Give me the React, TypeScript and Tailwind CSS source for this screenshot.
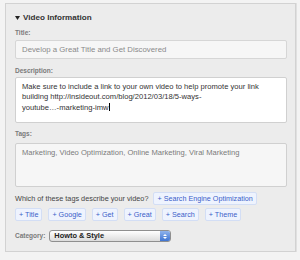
import React from 'react';

const tagButtons = ['Title', 'Google', 'Get', 'Great', 'Search', 'Theme'];

function TagButton({ label }: { label: string }) {
  return (
    <span className="inline-flex h-[13px] items-center rounded-[2px] border border-[#d3def5] bg-[#eef3fe] px-[3px] text-[7.2px] leading-none text-[#3b5fc9]">
      + {label}
    </span>
  );
}

function Label({ children }: { children: React.ReactNode }) {
  return <div className="text-[6.5px] font-bold leading-[8px] text-[#7a7a7a]">{children}</div>;
}

export default function App() {
  return (
    <div className="h-[260px] w-[300px] bg-[#f3f3f3] pl-[5px] pt-[3px] font-['Liberation_Sans',Arial,sans-serif]">
      <div className="flex h-[249px] w-[291px] flex-col border border-[#d2d2d2] bg-[#ececec] pl-[9px] pr-[8px] pt-[9px] shadow-[1px_0_0_#e0e0e0]">
        {/* header */}
        <div className="flex h-[10px] items-center gap-[2px]">
          <svg width="5" height="4" viewBox="0 0 5 4" className="mr-[1px]">
            <path d="M0 0 H5 L2.5 4 Z" fill="#222" />
          </svg>
          <span className="text-[8.1px] font-bold leading-none text-[#333]">Video Information</span>
        </div>

        <div className="mt-[6px]">
          <Label>Title:</Label>
        </div>
        <div className="mt-[3px] flex h-[19px] w-[272px] items-center rounded-[2px] border border-[#d6d6d6] bg-[#f6f6f6] pl-[6px] text-[7.8px] text-[#8a8a8a]">
          Develop a Great Title and Get Discovered
        </div>

        <div className="mt-[8px]">
          <Label>Description:</Label>
        </div>
        <div className="mt-[2px] h-[46px] w-[272px] rounded-[2px] border border-[#d0d0d0] bg-white pl-[6px] pr-[4px] pt-[4px] text-[7.6px] leading-[10px] text-[#333]">
          Make sure to include a link to your own video to help promote your link building http://insideout.com/blog/2012/03/18/5-ways-
          <br />
          youtube…-marketing-imw
          <span className="ml-[0.5px] inline-block h-[8px] w-[1px] translate-y-[1px] bg-black" />
        </div>

        <div className="mt-[7px]">
          <Label>Tags:</Label>
        </div>
        <div className="mt-[5px] h-[44px] w-[272px] rounded-[2px] border border-[#d0d0d0] bg-[#f6f6f6] pl-[6px] pt-[4px] text-[7.6px] leading-[10px] text-[#7b7b7b]">
          Marketing, Video Optimization, Online Marketing, Viral Marketing
        </div>

        <div className="mt-[5px] flex h-[13px] items-center gap-[5px]">
          <span className="text-[7.3px] leading-none text-[#444]">Which of these tags describe your video?</span>
          <TagButton label="Search Engine Optimization" />
        </div>

        <div className="mt-[3px] flex gap-[6px]">
          {tagButtons.map((t) => (
            <TagButton key={t} label={t} />
          ))}
        </div>

        <div className="mt-[9px] flex items-center gap-[4px]">
          <span className="text-[6.5px] font-bold leading-none text-[#7a7a7a]">Category:</span>
          <div className="flex h-[12px] w-[122px] items-center justify-between rounded-[3px] border border-[#8f8f8f] bg-gradient-to-b from-white to-[#dcdcdc] pl-[4px]">
            <span className="text-[7.4px] font-bold leading-none text-[#222]">Howto &amp; Style</span>
            <span className="flex h-full w-[10px] flex-col items-center justify-center gap-[1px] rounded-r-[2px] bg-gradient-to-b from-[#8fb3ec] to-[#3f74d1]">
              <svg width="4" height="2" viewBox="0 0 4 2"><path d="M0 2 L2 0 L4 2 Z" fill="#fff" /></svg>
              <svg width="4" height="2" viewBox="0 0 4 2"><path d="M0 0 L2 2 L4 0 Z" fill="#fff" /></svg>
            </span>
          </div>
        </div>
      </div>
    </div>
  );
}
